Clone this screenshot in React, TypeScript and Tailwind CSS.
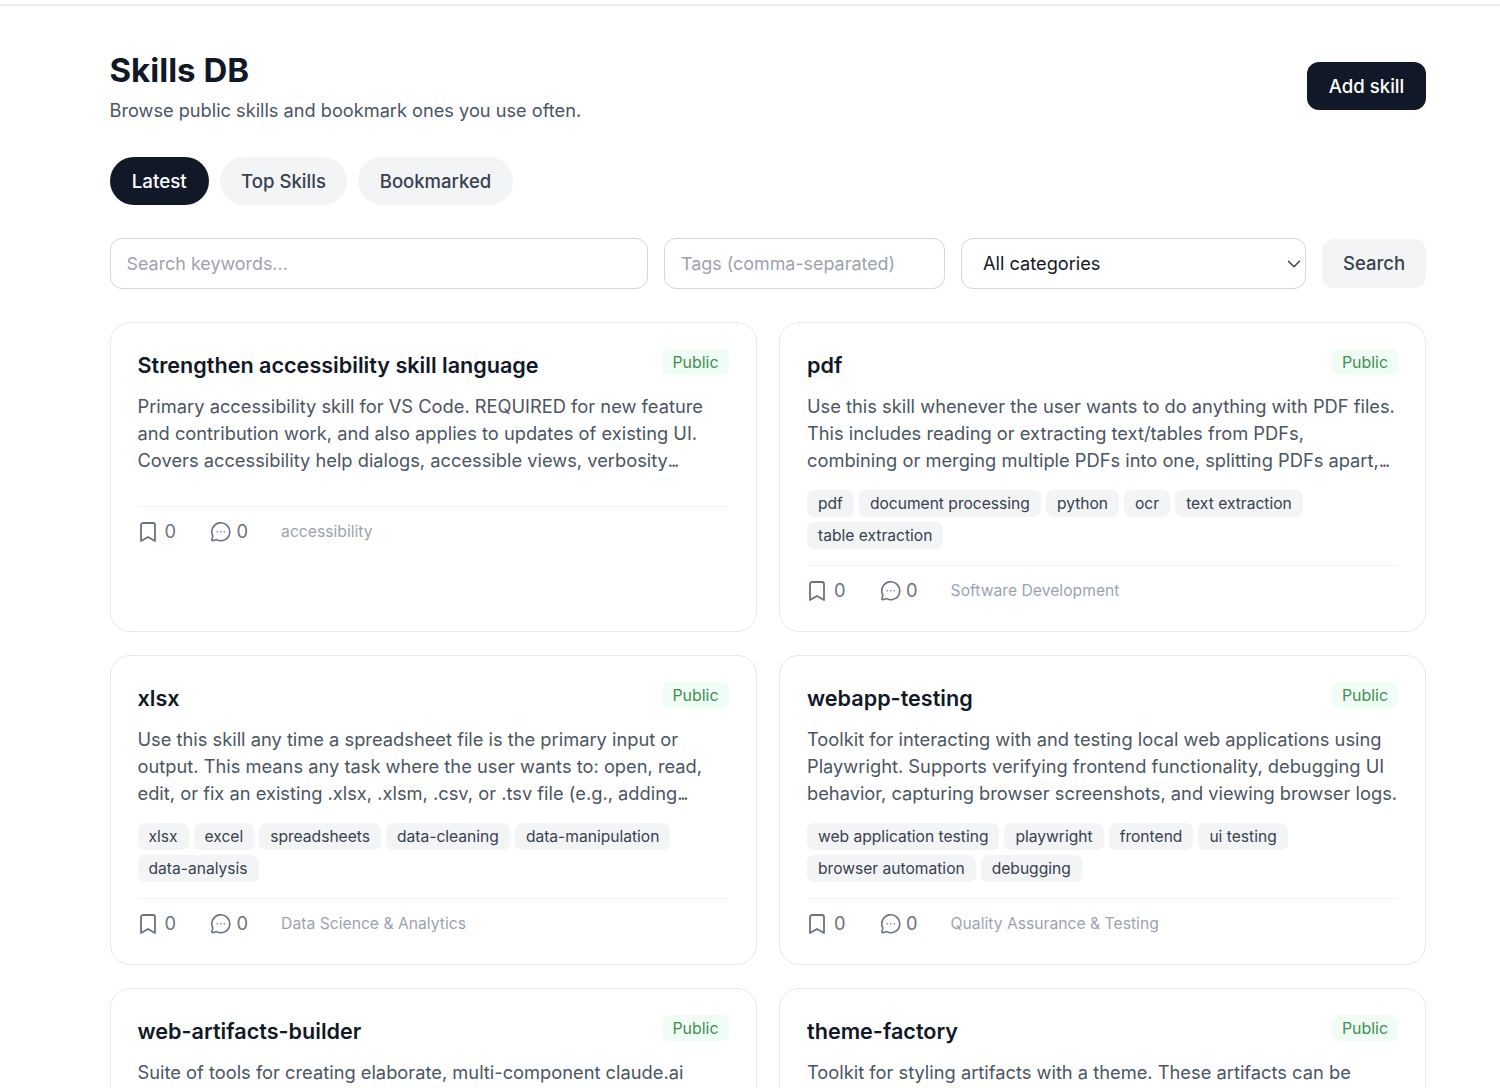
import React from "react";
import { Bookmark, MessageCircleMore, ChevronDown } from "lucide-react";

type Skill = { title: string; desc: string[]; more?: boolean; tags: string[]; cat: string };

const skills: Skill[] = [
  {
    title: "Strengthen accessibility skill language",
    desc: [
      "Primary accessibility skill for VS Code. REQUIRED for new feature",
      "and contribution work, and also applies to updates of existing UI.",
      "Covers accessibility help dialogs, accessible views, verbosity",
    ],
    more: true,
    tags: [],
    cat: "accessibility",
  },
  {
    title: "pdf",
    desc: [
      "Use this skill whenever the user wants to do anything with PDF files.",
      "This includes reading or extracting text/tables from PDFs,",
      "combining or merging multiple PDFs into one, splitting PDFs apart,",
    ],
    more: true,
    tags: ["pdf", "document processing", "python", "ocr", "text extraction", "table extraction"],
    cat: "Software Development",
  },
  {
    title: "xlsx",
    desc: [
      "Use this skill any time a spreadsheet file is the primary input or",
      "output. This means any task where the user wants to: open, read,",
      "edit, or fix an existing .xlsx, .xlsm, .csv, or .tsv file (e.g., adding",
    ],
    more: true,
    tags: ["xlsx", "excel", "spreadsheets", "data-cleaning", "data-manipulation", "data-analysis"],
    cat: "Data Science & Analytics",
  },
  {
    title: "webapp-testing",
    desc: [
      "Toolkit for interacting with and testing local web applications using",
      "Playwright. Supports verifying frontend functionality, debugging UI",
      "behavior, capturing browser screenshots, and viewing browser logs.",
    ],
    tags: ["web application testing", "playwright", "frontend", "ui testing", "browser automation", "debugging"],
    cat: "Quality Assurance & Testing",
  },
  {
    title: "web-artifacts-builder",
    desc: ["Suite of tools for creating elaborate, multi-component claude.ai"],
    tags: [],
    cat: "",
  },
  {
    title: "theme-factory",
    desc: ["Toolkit for styling artifacts with a theme. These artifacts can be"],
    tags: [],
    cat: "",
  },
];

function Card({ s }: { s: Skill }) {
  return (
    <div className="flex h-[310px] flex-col rounded-[20px] border-[1.5px] border-[#e7e8ec] bg-white px-[27px] pt-[26px]">
      <div className="flex items-start justify-between">
        <h2 className="text-[21.6px] leading-[32px] font-semibold text-[#111827]">{s.title}</h2>
        <span className="h-[26px] rounded-[7px] bg-[#f0fdf4] px-[10px] pt-[1px] text-[15.9px] leading-[26px] text-[#3f8f53]">Public</span>
      </div>
      <div className="mt-[12px] text-[18.3px] leading-[27px] text-[#4b5563]">
        {s.desc.map((l, i) => (
          <div key={l} className="whitespace-nowrap">
            {l}
            {s.more && i === s.desc.length - 1 && <span className="tracking-[-2.2px]">...</span>}
          </div>
        ))}
      </div>
      {s.tags.length > 0 && (
        <div className="mt-[16px] flex flex-wrap gap-x-[5px] gap-y-[5px]">
          {s.tags.map((t) => (
            <span key={t} className="rounded-[7px] bg-[#f3f4f6] px-[11px] text-[15.6px] leading-[27px] text-[#374151]">{t}</span>
          ))}
        </div>
      )}
      <div className={`flex h-[49px] items-center border-t-[1.5px] border-[#f3f4f6] pt-[2px] text-[#6b7280] ${s.tags.length > 0 ? "mt-[16px]" : "mt-[32px]"}`}>
        <Bookmark size={24} strokeWidth={1.8} className="ml-[-2px]" />
        <span className="ml-[5px] text-[18.3px]">0</span>
        <MessageCircleMore size={21.5} strokeWidth={1.8} className="ml-[34px]" />
        <span className="ml-[5px] text-[18.3px]">0</span>
        <span className="ml-[33px] text-[15.7px] text-[#9ca3af]">{s.cat}</span>
      </div>
    </div>
  );
}

export default function App() {
  return (
    <div className="h-[1088px] overflow-hidden bg-white font-['Inter',sans-serif]">
      <div className="h-[6px] border-b-[2px] border-[#eceef1]" />
      <main className="pr-[74px] pl-[109.5px] pt-[44px]">
        <header className="flex items-start justify-between">
          <div>
            <h1 className="text-[33px] leading-[40px] font-bold text-[#111827]">Skills DB</h1>
            <p className="mt-[6px] text-[18.2px] leading-[28px] text-[#4b5563]">Browse public skills and bookmark ones you use often.</p>
          </div>
          <button className="mt-[12px] h-[48px] w-[119px] rounded-[12px] bg-[#111827] pt-[2px] text-[18.6px] font-medium text-white">Add skill</button>
        </header>
        <nav className="mt-[33px] flex gap-[11px]">
          <button className="h-[48px] w-[99.5px] rounded-full bg-[#111827] pt-[2px] text-[18.8px] font-medium text-white">Latest</button>
          <button className="h-[48px] w-[127px] rounded-full bg-[#f3f4f6] pt-[1px] text-[18.6px] font-medium text-[#374151]">Top Skills</button>
          <button className="h-[48px] w-[155px] rounded-full bg-[#f3f4f6] pt-[1px] text-[18.5px] font-medium text-[#374151]">Bookmarked</button>
        </nav>
        <form className="mt-[33px] flex items-center gap-[16px]">
          <input placeholder="Search keywords..." className="h-[51px] w-[538.5px] rounded-[12px] border-[1.5px] border-[#d4d6dc] px-[16px] text-[17.9px] placeholder:text-[#9ca3af]" />
          <input placeholder="Tags (comma-separated)" className="h-[51px] w-[281px] rounded-[12px] border-[1.5px] border-[#d4d6dc] px-[16px] text-[17.9px] placeholder:text-[#9ca3af]" />
          <div className="relative flex h-[51px] w-[345px] items-center rounded-[12px] border-[1.5px] border-[#d4d6dc] pl-[21px] text-[18.2px] text-[#111827]">
            All categories
            <ChevronDown size={22} strokeWidth={1.6} className="absolute right-[0px] text-[#374151]" />
          </div>
          <button type="button" className="h-[49px] flex-1 rounded-[12px] bg-[#f3f4f6] text-[18.5px] font-medium text-[#374151]">Search</button>
        </form>
        <section className="mt-[33px] grid grid-cols-2 gap-x-[22.5px] gap-y-[23px]">
          {skills.map((s) => (
            <Card key={s.title} s={s} />
          ))}
        </section>
      </main>
    </div>
  );
}
